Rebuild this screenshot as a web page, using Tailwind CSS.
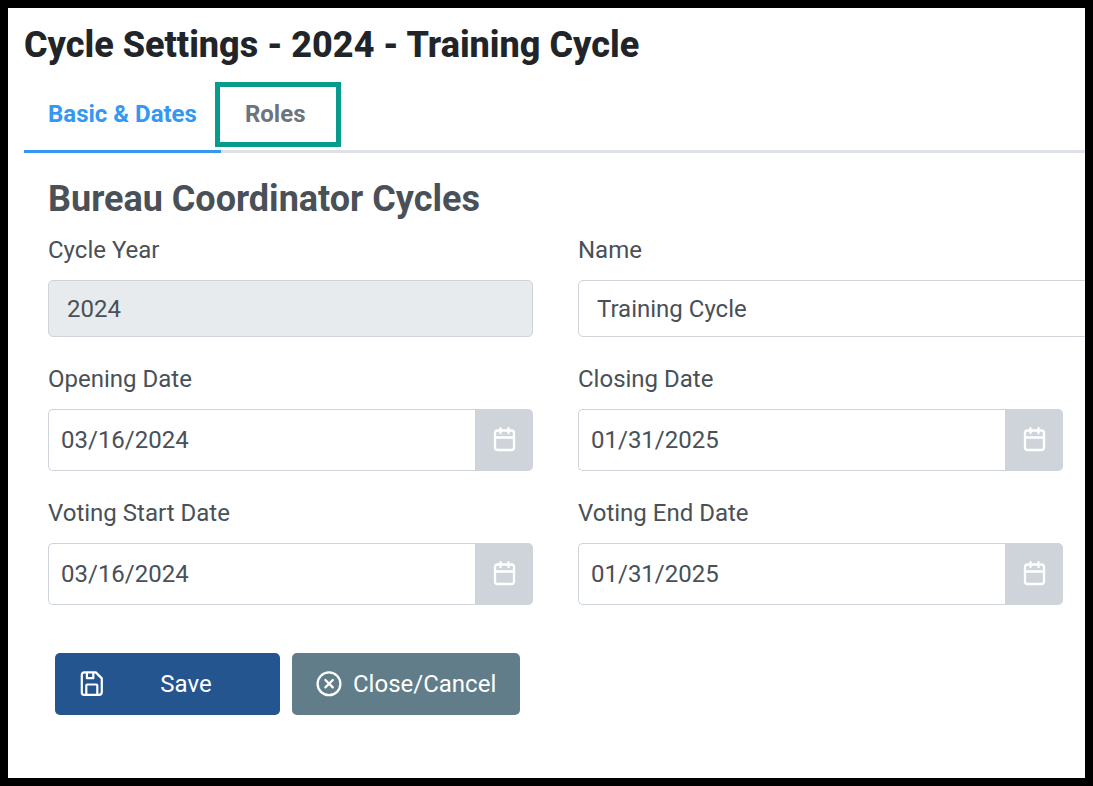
<!DOCTYPE html>
<html lang="en">
<head>
    <meta charset="UTF-8">
    <meta name="viewport" content="width=device-width, initial-scale=1.0">
    <title>Cycle Settings</title>
    <script src="https://cdn.jsdelivr.net/npm/@tailwindcss/browser@4"></script>
</head>
<body class="bg-white font-['Roboto',sans-serif] text-2xl text-[#495057]">
    <svg class="hidden">
        <symbol id="calendar" viewBox="0 0 26 26" fill="none" stroke="currentColor" stroke-width="2.3" stroke-linecap="round">
            <rect x="4" y="3.5" width="19" height="19.5" rx="2.6"/>
            <path d="M4 10.5h19M9.5 1.2v5M17.5 1.2v5"/>
        </symbol>
    </svg>

    <div class="min-h-screen overflow-hidden border-8 border-black pt-4 pl-4">
        <h1 class="text-4xl leading-[42px] font-extrabold text-[#212529]">Cycle Settings - 2024 - Training Cycle</h1>

        <nav class="mt-[10px] flex border-b-3 border-[#dee2e6] font-bold">
            <a href="#basic" class="-mb-[3px] flex h-[77px] items-center border-b-3 border-[#3498f3] px-6 pt-[2px] text-[#3498f3]">Basic &amp; Dates</a>
            <a href="#roles" class="relative flex h-[74px] items-center px-6 pt-[2px] text-[#6c757d]">
                Roles
                <span class="absolute top-[6px] -right-3 bottom-[3px] -left-[6px] border-5 border-[#079b8c]"></span>
            </a>
        </nav>

        <form id="cycle-form" class="pt-6 pr-[22px] pl-6">
            <h2 class="mb-[11px] text-4xl leading-11 font-bold">Bureau Coordinator Cycles</h2>

            <div class="grid grid-cols-2 gap-x-[45px] gap-y-6">
                <div>
                    <label for="year" class="mb-3 block leading-9">Cycle Year</label>
                    <input type="text" id="year" value="2024" disabled class="block h-[57px] w-full rounded-[5px] border border-[#ced4da] bg-[#e7ebee] px-[18px]">
                </div>
                <div class="-mr-10">
                    <label for="name" class="mb-3 block leading-9">Name</label>
                    <input type="text" id="name" value="Training Cycle" class="block h-[57px] w-full rounded-[5px] border border-[#ced4da] px-[18px]">
                </div>
                <div>
                    <label for="opening" class="mb-3 block leading-9">Opening Date</label>
                    <div class="flex h-[62px]">
                        <input type="text" id="opening" value="03/16/2024" class="min-w-0 flex-1 rounded-l-[5px] border border-r-0 border-[#ced4da] px-3">
                        <button type="button" aria-label="Choose opening date" class="flex w-[58px] items-center justify-center rounded-r-[5px] bg-[#ced4da] text-white">
                            <svg class="size-[26px]"><use href="#calendar"/></svg>
                        </button>
                    </div>
                </div>
                <div>
                    <label for="closing" class="mb-3 block leading-9">Closing Date</label>
                    <div class="flex h-[62px]">
                        <input type="text" id="closing" value="01/31/2025" class="min-w-0 flex-1 rounded-l-[5px] border border-r-0 border-[#ced4da] px-3">
                        <button type="button" aria-label="Choose closing date" class="flex w-[58px] items-center justify-center rounded-r-[5px] bg-[#ced4da] text-white">
                            <svg class="size-[26px]"><use href="#calendar"/></svg>
                        </button>
                    </div>
                </div>
                <div>
                    <label for="voting-start" class="mb-3 block leading-9">Voting Start Date</label>
                    <div class="flex h-[62px]">
                        <input type="text" id="voting-start" value="03/16/2024" class="min-w-0 flex-1 rounded-l-[5px] border border-r-0 border-[#ced4da] px-3">
                        <button type="button" aria-label="Choose voting start date" class="flex w-[58px] items-center justify-center rounded-r-[5px] bg-[#ced4da] text-white">
                            <svg class="size-[26px]"><use href="#calendar"/></svg>
                        </button>
                    </div>
                </div>
                <div>
                    <label for="voting-end" class="mb-3 block leading-9">Voting End Date</label>
                    <div class="flex h-[62px]">
                        <input type="text" id="voting-end" value="01/31/2025" class="min-w-0 flex-1 rounded-l-[5px] border border-r-0 border-[#ced4da] px-3">
                        <button type="button" aria-label="Choose voting end date" class="flex w-[58px] items-center justify-center rounded-r-[5px] bg-[#ced4da] text-white">
                            <svg class="size-[26px]"><use href="#calendar"/></svg>
                        </button>
                    </div>
                </div>
            </div>

            <div class="mt-12 flex gap-3 pl-[7px] text-white">
                <button type="submit" class="flex h-[62px] w-[225px] items-center gap-[11px] rounded-[5px] bg-[#24558f] px-6">
                    <svg class="size-[26px] shrink-0" viewBox="0 0 26 26" fill="none" stroke="currentColor" stroke-width="2.2" stroke-linejoin="round">
                        <path d="M5.2 1.4h11.6l6 6v13.7a2.8 2.8 0 0 1-2.8 2.8H5.2a2.4 2.4 0 0 1-2.4-2.4V3.8a2.4 2.4 0 0 1 2.4-2.4z"/>
                        <path d="M7.9 2v5.2h6.4V2M7.3 23.6v-9.1a1 1 0 0 1 1-1h9a1 1 0 0 1 1 1v9.1"/>
                    </svg>
                    <span class="flex-1 text-center">Save</span>
                </button>
                <button type="button" class="flex h-[62px] items-center gap-[11px] rounded-[5px] bg-[#607d89] px-6">
                    <svg class="size-[26px] shrink-0" viewBox="0 0 26 26" fill="none" stroke="currentColor" stroke-width="2.3" stroke-linecap="round">
                        <circle cx="13" cy="12.8" r="11.4"/>
                        <path d="M9.4 9l7.4 7.4M16.8 9l-7.4 7.4"/>
                    </svg>
                    <span>Close/Cancel</span>
                </button>
            </div>
        </form>
    </div>
</body>
</html>
